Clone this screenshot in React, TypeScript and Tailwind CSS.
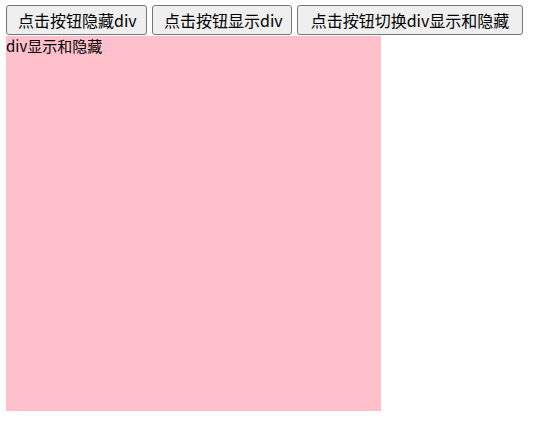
import React from "react";

export default function App() {
  const font = { fontFamily: '"Microsoft YaHei", "Noto Sans CJK SC", "Noto Sans", sans-serif' };
  const btn =
    "h-[30px] px-[11px] border border-[#767676] rounded-[3px] bg-[#efefef] text-[16px] leading-none text-black whitespace-nowrap";
  return (
    <div className="min-h-[433px] w-[558px] bg-white pl-[6px] pt-[5px]" style={font}>
      <div className="flex gap-[5px]">
        <button className={`${btn} w-[141px]`}>点击按钮隐藏div</button>
        <button className={`${btn} w-[140px]`}>点击按钮显示div</button>
        <button className={`${btn} w-[226px]`}>点击按钮切换div显示和隐藏</button>
      </div>
      <div className="mt-[1px] w-[375px] h-[375px] bg-[#ffc0cb] text-[15px] leading-[20px] text-black">
        div显示和隐藏
      </div>
    </div>
  );
}
